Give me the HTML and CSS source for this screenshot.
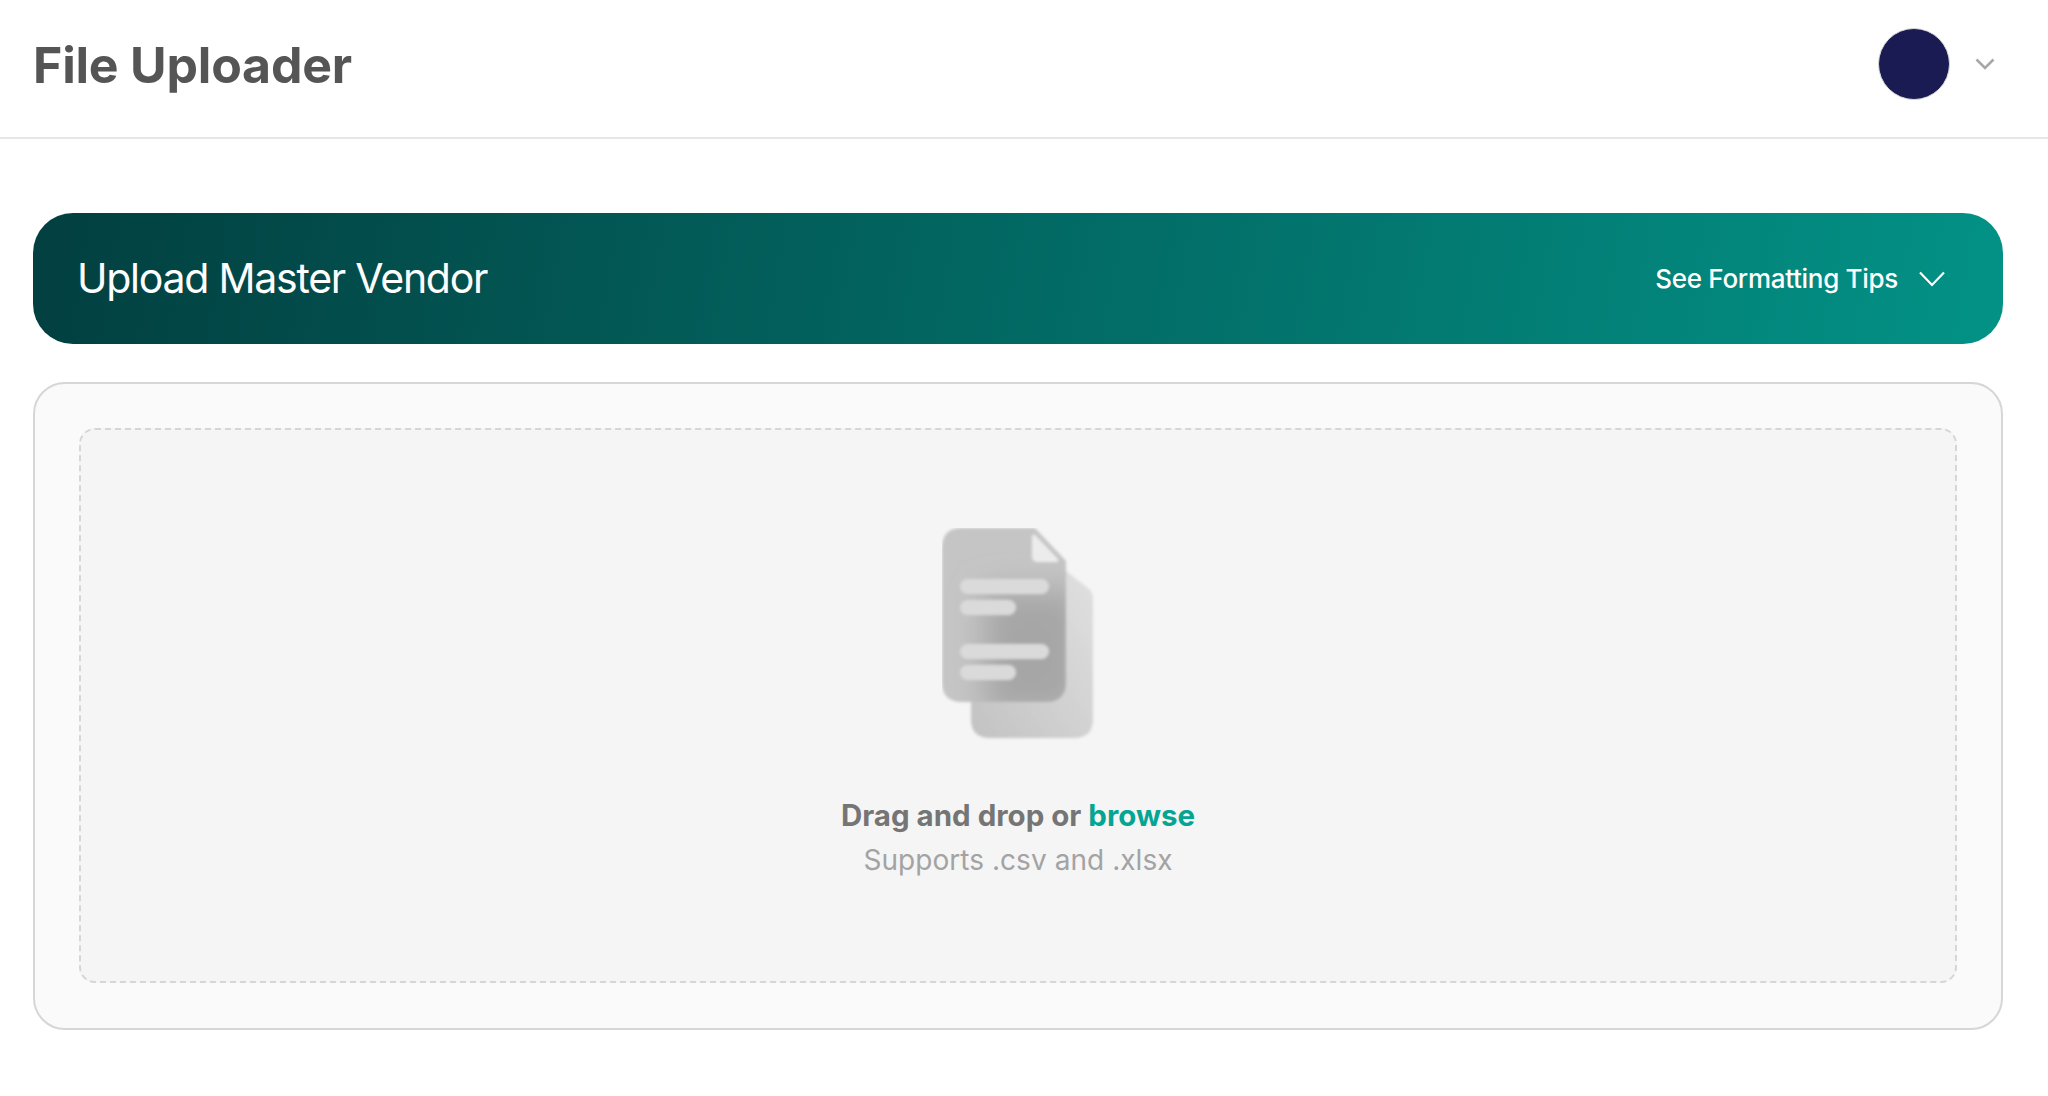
FILE: index.html
```html
<!DOCTYPE html>
<html lang="en">
<head>
    <meta charset="UTF-8">
    <meta name="viewport" content="width=device-width, initial-scale=1.0">
    <title>File Uploader</title>
    <link rel="stylesheet" href="styles.css">
</head>
<body>
    <header class="topbar">
        <h1 class="topbar-title">File Uploader</h1>
        <div class="user-menu">
            <div class="avatar"></div>
            <svg class="user-chevron" width="20" height="12" viewBox="0 0 20 12" fill="none">
                <path d="M1.5 1.5 L10 10 L18.5 1.5" stroke="#a8a8a8" stroke-width="2.6"/>
            </svg>
        </div>
    </header>

    <main class="content">
        <section class="banner">
            <h2 class="banner-title">Upload Master Vendor</h2>
            <button class="tips-button">
                <span>See Formatting Tips</span>
                <svg width="26" height="16" viewBox="0 0 26 16" fill="none">
                    <path d="M1 1.5 L13 14 L25 1.5" stroke="#ffffff" stroke-width="2.2"/>
                </svg>
            </button>
        </section>

        <section class="upload-card">
            <div class="dropzone">
                <svg class="files-icon" width="156" height="216" viewBox="0 0 156 216" fill="none">
                    <defs>
                        <filter id="soft" x="-10%" y="-10%" width="120%" height="120%">
                            <feGaussianBlur stdDeviation="1.7"/>
                        </filter>
                        <filter id="shade" x="-40%" y="-40%" width="180%" height="180%">
                            <feGaussianBlur stdDeviation="16"/>
                        </filter>
                        <linearGradient id="back-fill" x1="0" y1="1" x2="1" y2="0">
                            <stop offset="0" stop-color="#c2c2c2"/>
                            <stop offset="1" stop-color="#e2e2e2"/>
                        </linearGradient>
                        <clipPath id="front-clip">
                            <path d="M20 0 H93 L124 33 V154 Q124 174 104 174 H20 Q0 174 0 154 V20 Q0 0 20 0 Z"/>
                        </clipPath>
                    </defs>
                    <g filter="url(#soft)">
                        <path d="M29 20 H95 L147 61 Q151 65 151 70 V191 Q151 210 132 210 H48 Q29 210 29 191 Z" fill="url(#back-fill)"/>
                        <path d="M20 0 H93 L124 33 V154 Q124 174 104 174 H20 Q0 174 0 154 V20 Q0 0 20 0 Z" fill="#c5c5c5"/>
                        <g clip-path="url(#front-clip)">
                            <path d="M42 62 H140 V186 H42 Z" fill="#a6a6a6" filter="url(#shade)"/>
                        </g>
                        <path d="M93 7 L116 31 Q117 34 114 34 H96 Q90 34 90 28 V10 Q90 5 93 7 Z" fill="#ececec"/>
                        <rect x="18" y="51" width="89" height="15" rx="7.5" fill="#dadada"/>
                        <rect x="18" y="72" width="56" height="15" rx="7.5" fill="#dadada"/>
                        <rect x="18" y="116" width="89" height="15" rx="7.5" fill="#dadada"/>
                        <rect x="18" y="137" width="56" height="15" rx="7.5" fill="#dadada"/>
                    </g>
                </svg>
                <p class="drop-text">Drag and drop or <a href="#" class="browse-link">browse</a></p>
                <p class="drop-hint">Supports .csv and .xlsx</p>
            </div>
        </section>
    </main>
</body>
</html>
```

FILE: styles.css
```css
* {
    box-sizing: border-box;
}
body {
    font-family: 'Inter', 'Liberation Sans', sans-serif;
    background-color: #ffffff;
    margin: 0;
}
.topbar {
    height: 139px;
    display: flex;
    align-items: center;
    justify-content: space-between;
    padding: 0 53px 10px 33px;
    border-bottom: 2px solid #e6e6e6;
}
.topbar-title {
    margin: 2px 0 0;
    font-size: 50px;
    font-weight: 700;
    letter-spacing: -0.2px;
    color: #555555;
}
.user-menu {
    display: flex;
    align-items: center;
    gap: 25px;
}
.avatar {
    width: 72px;
    height: 72px;
    border-radius: 50%;
    background-color: #1a1b52;
    border: 1px solid #d8d8d8;
}
.content {
    padding: 74px 45px 0 33px;
}
.banner {
    height: 131px;
    display: flex;
    align-items: center;
    justify-content: space-between;
    padding: 0 58px 2px 44px;
    border-radius: 40px;
    background: linear-gradient(100deg, #023f40 0%, #039286 100%);
    color: white;
}
.banner-title {
    margin: 0;
    font-size: 41px;
    font-weight: 400;
    letter-spacing: -1.25px;
}
.tips-button {
    display: flex;
    align-items: center;
    gap: 21px;
    margin-top: 2px;
    padding: 0;
    background: transparent;
    border: none;
    color: white;
    font-family: inherit;
    font-size: 26px;
    font-weight: 450;
    letter-spacing: -0.3px;
    cursor: pointer;
}
.upload-card {
    height: 648px;
    margin-top: 38px;
    padding: 44px 44px 45px;
    background-color: #fafafa;
    border: 2px solid #d6d6d6;
    border-radius: 32px;
}
.dropzone {
    height: 100%;
    display: flex;
    flex-direction: column;
    align-items: center;
    padding-top: 98px;
    background-color: #f5f5f5;
    border: 2px dashed #d6d6d6;
    border-radius: 16px;
}
.files-icon {
    margin-left: 4px;
}
.drop-text {
    margin: 49px 0 0;
    font-size: 29.5px;
    font-weight: 650;
    line-height: 45px;
    color: #757575;
}
.browse-link {
    color: #04a593;
    text-decoration: none;
}
.drop-hint {
    margin: 0;
    font-size: 28px;
    letter-spacing: 0.05px;
    line-height: 44px;
    color: #a3a3a3;
}
```
